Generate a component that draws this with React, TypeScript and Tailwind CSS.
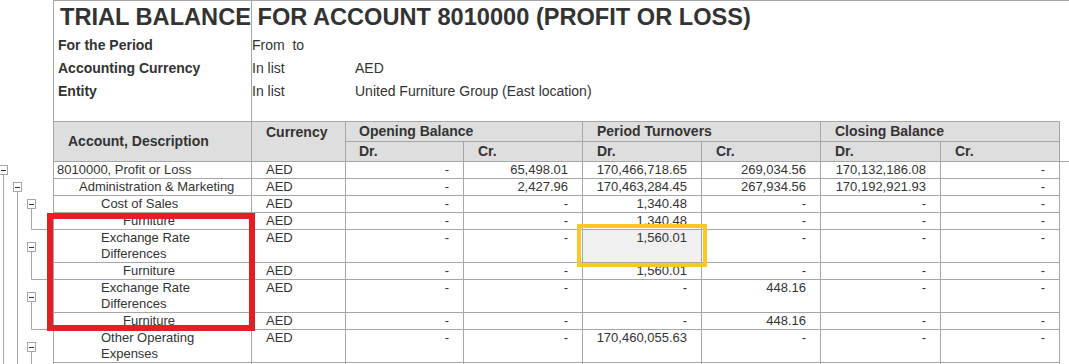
import React from "react";

type Row = {
  label: string;
  lvl: number;
  v: string[];
  sel?: number;
};

const rows: Row[] = [
  { label: "8010000, Profit or Loss", lvl: 0, v: ["AED", "-", "65,498.01", "170,466,718.65", "269,034.56", "170,132,186.08", "-"] },
  { label: "Administration & Marketing", lvl: 1, v: ["AED", "-", "2,427.96", "170,463,284.45", "267,934.56", "170,192,921.93", "-"] },
  { label: "Cost of Sales", lvl: 2, v: ["AED", "-", "-", "1,340.48", "-", "-", "-"] },
  { label: "Furniture", lvl: 3, v: ["AED", "-", "-", "1,340.48", "-", "-", "-"] },
  { label: "Exchange Rate Differences", lvl: 2, v: ["AED", "-", "-", "1,560.01", "-", "-", "-"], sel: 3 },
  { label: "Furniture", lvl: 3, v: ["AED", "-", "-", "1,560.01", "-", "-", "-"] },
  { label: "Exchange Rate Differences", lvl: 2, v: ["AED", "-", "-", "-", "448.16", "-", "-"] },
  { label: "Furniture", lvl: 3, v: ["AED", "-", "-", "-", "448.16", "-", "-"] },
  { label: "Other Operating Expenses", lvl: 2, v: ["AED", "-", "-", "170,460,055.63", "-", "-", "-"] },
  { label: "", lvl: 3, v: ["", "", "", "", "", "", ""] },
];

const lvlPad = ["pl-[3px]", "pl-[25px]", "pl-[47px]", "pl-[69px]"];
const COLS = "grid grid-cols-[198px_94px_118px_119px_119px_119px_120px_119px]";
const B = "border-[#a6a6a6]";

function Tree() {
  const g = "#a6a6a6";
  const boxes: [number, number][] = [
    [3.5, 165],
    [17.5, 182],
    [31.5, 199],
    [31.5, 242],
    [31.5, 292],
    [31.5, 342],
  ];
  return (
    <svg width="53" height="364" className="block">
      <line x1="3.5" y1="175" x2="3.5" y2="364" stroke={g} />
      <line x1="17.5" y1="192" x2="17.5" y2="364" stroke={g} />
      <polyline points="31.5,209 31.5,229.5 53,229.5" fill="none" stroke={g} />
      <polyline points="31.5,252 31.5,279.5 53,279.5" fill="none" stroke={g} />
      <polyline points="31.5,302 31.5,329.5 53,329.5" fill="none" stroke={g} />
      <line x1="31.5" y1="352" x2="31.5" y2="364" stroke={g} />
      {boxes.map(([c, t], i) => (
        <g key={i}>
          <rect x={c - 4} y={t + 0.5} width="8" height="9" fill="#fff" stroke={g} />
          <line x1={c - 2.5} y1={t + 5.5} x2={c + 2.5} y2={t + 5.5} stroke="#333" />
        </g>
      ))}
    </svg>
  );
}

export default function App() {
  return (
    <div className="relative w-[1069px] h-[364px] overflow-hidden bg-white text-[#333] font-['Liberation_Sans',Arial,sans-serif] flex items-start">
      <div className="w-[53px] shrink-0">
        <Tree />
      </div>
      <div className="w-[1016px] shrink-0 flex flex-col">
        {/* Report header block */}
        <div className={`h-[121px] shrink-0 border-t border-l ${B} flex`}>
          <div className={`w-[198px] shrink-0 border-r ${B} flex flex-col`}>
            <div className="h-[33px] shrink-0 pl-[6px] text-[23.6px] font-bold leading-[33px] whitespace-nowrap relative z-10">
              TRIAL BALANCE FOR ACCOUNT 8010000 (PROFIT OR LOSS)
            </div>
            <div className="h-[23px] shrink-0 leading-[23px] pl-[4px] text-[14px] font-bold">For the Period</div>
            <div className="h-[23px] shrink-0 leading-[23px] pl-[4px] text-[14px] font-bold">Accounting Currency</div>
            <div className="h-[23px] shrink-0 leading-[23px] pl-[4px] text-[14px] font-bold">Entity</div>
          </div>
          <div className="flex flex-col text-[14px]">
            <div className="h-[33px] shrink-0" />
            <div className="h-[23px] shrink-0 leading-[23px] flex">
              <span className="w-[103px] whitespace-pre">From  to</span>
            </div>
            <div className="h-[23px] shrink-0 leading-[23px] flex">
              <span className="w-[103px]">In list</span>
              <span>AED</span>
            </div>
            <div className="h-[23px] shrink-0 leading-[23px] flex">
              <span className="w-[103px]">In list</span>
              <span>United Furniture Group (East location)</span>
            </div>
          </div>
        </div>

        {/* Table header */}
        <div className="flex shrink-0">
          <div className={`w-[1007px] border-t border-l ${B} ${COLS} grid-rows-[20px_20px] bg-[#dedede] text-[14px] font-bold`}>
            <div className={`row-span-2 border-r border-b ${B} pl-[14px] flex items-center`}>Account, Description</div>
            <div className={`row-span-2 border-r border-b ${B} pl-[14px] leading-[19px] pt-[1px]`}>Currency</div>
            <div className={`col-span-2 border-r border-b ${B} pl-[13px] leading-[19px]`}>Opening Balance</div>
            <div className={`col-span-2 border-r border-b ${B} pl-[14px] leading-[19px]`}>Period Turnovers</div>
            <div className={`col-span-2 border-r border-b ${B} pl-[14px] leading-[19px]`}>Closing Balance</div>
            <div className={`border-r border-b ${B} pl-[13px] leading-[19px]`}>Dr.</div>
            <div className={`border-r border-b ${B} pl-[14px] leading-[19px]`}>Cr.</div>
            <div className={`border-r border-b ${B} pl-[14px] leading-[19px]`}>Dr.</div>
            <div className={`border-r border-b ${B} pl-[14px] leading-[19px]`}>Cr.</div>
            <div className={`border-r border-b ${B} pl-[14px] leading-[19px]`}>Dr.</div>
            <div className={`border-r border-b ${B} pl-[14px] leading-[19px]`}>Cr.</div>
          </div>
          <div className={`w-[9px] self-end border-b ${B}`} />
        </div>

        {/* Table body */}
        <div className={`w-[1007px] shrink-0 border-l ${B} text-[13px] leading-[16px]`}>
          {rows.map((r, i) => (
            <div key={i} className={`${COLS} min-h-[17px]`}>
              <div className={`border-r border-b ${B} ${lvlPad[r.lvl]} pr-[2px]`}>{r.label}</div>
              <div className={`border-r border-b ${B} pl-[14px]`}>{r.v[0]}</div>
              {r.v.slice(1).map((x, j) => (
                <div
                  key={j}
                  className={`border-r border-b ${B} pr-[14px] text-right ${r.sel === j + 1 ? "bg-[#f0f0f0]" : ""}`}
                >
                  {x}
                </div>
              ))}
            </div>
          ))}
        </div>
      </div>

      {/* Annotations */}
      <div className="absolute left-[47px] top-[213px] w-[208px] h-[118px] border-[6px] border-[#e31e24] z-20" />
      <div className="absolute left-[577px] top-[224px] w-[130px] h-[43px] border-[4px] border-[#fac825] z-20" />
    </div>
  );
}
